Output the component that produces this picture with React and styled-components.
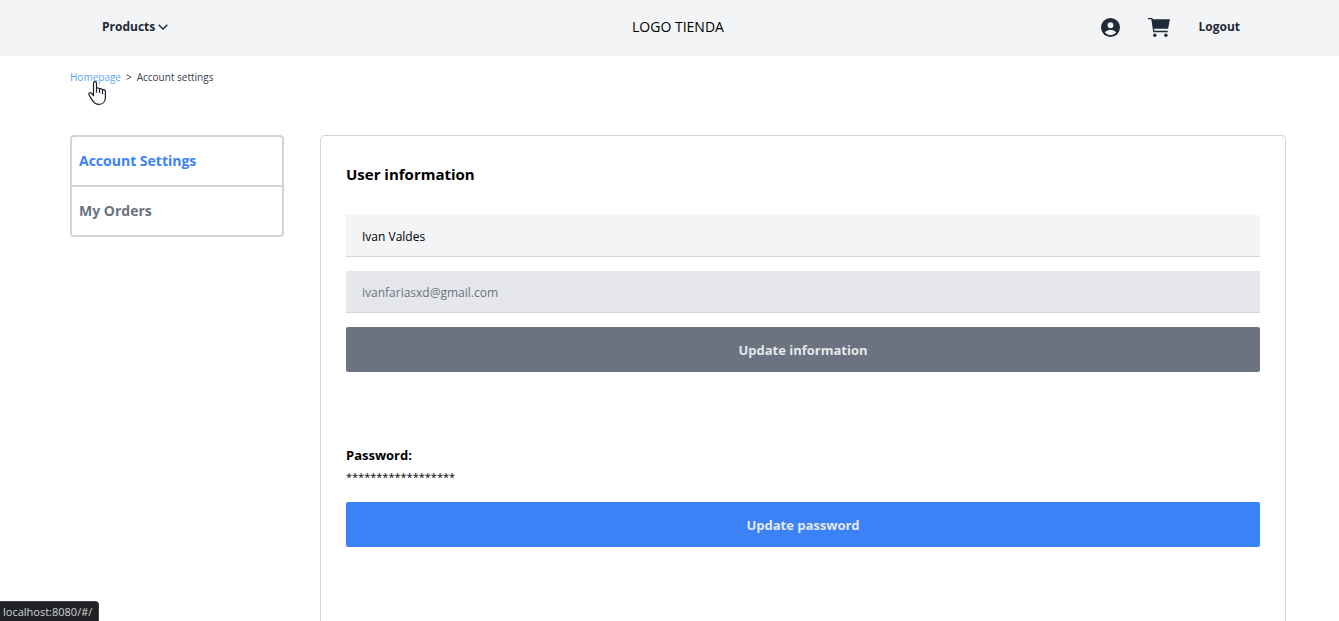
import React from "react";
import styled, { createGlobalStyle } from "styled-components";

const GlobalStyle = createGlobalStyle`
  *, *::before, *::after { box-sizing: border-box; }
  body {
    margin: 0;
    background: #fff;
    color: #000;
    font: 400 13px/20px "Open Sans", "Noto Sans", sans-serif;
  }
  button, input { font: inherit; }
  h1, h2, p, ul { margin: 0; padding: 0; }
`;

const Shell = styled.div`
  display: flex;
  flex-direction: column;
  min-height: 100vh;
`;

const Header = styled.header`
  display: grid;
  grid-template-columns: 1fr auto 1fr;
  align-items: center;
  height: 56px;
  padding: 0 85px 2px 102px;
  background: #f3f4f6;
  color: #1f2937;
`;

const MenuButton = styled.button`
  display: flex;
  align-items: center;
  justify-self: start;
  gap: 3px;
  padding: 0;
  border: 0;
  background: none;
  color: inherit;
  font-size: 12px;
  font-weight: 700;
  line-height: 20px;
  cursor: pointer;
`;

const Logo = styled.span`
  color: #000;
  font-size: 14px;
`;

const HeaderActions = styled.nav`
  display: flex;
  align-items: center;
  justify-self: end;
  gap: 28px;
  padding-right: 14px;
`;

const HeaderLink = styled.a`
  display: flex;
  color: inherit;
  font-size: 12px;
  font-weight: 700;
  text-decoration: none;
`;

const Page = styled.main`
  display: flex;
  flex: 1;
  flex-direction: column;
  padding: 11px 53px 0 70px;
`;

const Breadcrumb = styled.nav`
  display: flex;
  gap: 5px;
  color: #374151;
  font-size: 10px;
`;

const BreadcrumbLink = styled.a`
  color: #60a5fa;
  text-decoration: none;
`;

const Columns = styled.div`
  display: grid;
  flex: 1;
  grid-template-columns: 214px 1fr;
  gap: 36px;
  margin-top: 48px;
`;

const SideMenu = styled.ul`
  align-self: start;
  list-style: none;
  border: 2px solid #d1d5db;
  border-radius: 4px;
`;

const SideItem = styled.li`
  & + & { border-top: 2px solid #d1d5db; }
`;

const SideLink = styled.a`
  display: block;
  padding: 14px 7px;
  color: ${({ $active }) => ($active ? "#3b82f6" : "#6b7280")};
  font-size: 14px;
  font-weight: 700;
  text-decoration: none;
`;

const Panel = styled.section`
  padding: 24px 25px;
  border: 1px solid #d1d5db;
  border-bottom: 0;
  border-radius: 5px 5px 0 0;
`;

const Title = styled.h1`
  font-size: 15px;
  font-weight: 700;
  line-height: 28px;
`;

const Form = styled.form`
  display: flex;
  flex-direction: column;
  gap: 14px;
  margin-top: 27px;
`;

const Field = styled.input`
  width: 100%;
  height: 42px;
  padding: 2px 16px 0;
  border: 0;
  border-bottom: 1px solid #d1d5db;
  border-radius: 0;
  background: #f3f4f6;
  color: #000;
  font-size: 12px;
  outline: 0;

  &:disabled {
    background: #e5e7eb;
    color: #6b7280;
  }
`;

const ActionButton = styled.button`
  width: 100%;
  height: 45px;
  border: 0;
  border-radius: 2px;
  background: ${({ $primary }) => ($primary ? "#3b82f6" : "#6b7280")};
  color: #e5e7eb;
  font-weight: 700;
  cursor: pointer;
`;

const PasswordBlock = styled.section`
  margin-top: 73px;
`;

const PasswordTitle = styled.h2`
  font-size: 13px;
  font-weight: 700;
  line-height: 21px;
`;

const PasswordMask = styled.p`
  margin-bottom: 15px;
  font-size: 11px;
  line-height: 21px;
`;

const StatusBar = styled.div`
  position: fixed;
  left: 0;
  bottom: 0;
  padding: 1px 6px 0 3px;
  border-top: 1px solid #3c4043;
  border-right: 1px solid #3c4043;
  border-top-right-radius: 4px;
  background: #202124;
  color: #d1d5db;
  font-size: 11px;
  line-height: 18px;
`;

const Pointer = styled.svg`
  position: absolute;
  left: 88px;
  top: 81px;
  pointer-events: none;
`;

const ChevronIcon = () => (
  <svg width="10" height="6" viewBox="0 0 10 6" aria-hidden="true">
    <path d="M0.700 0.700 5 5 9.300 0.700" fill="none" stroke="currentColor" strokeWidth="1.400" />
  </svg>
);

const AccountIcon = () => (
  <svg width="19" height="19" viewBox="0 0 19 19" aria-hidden="true">
    <circle cx="9.5" cy="9.5" r="9.5" fill="currentColor" />
    <circle cx="9.5" cy="7.200" r="2.900" fill="#f3f4f6" />
    <path d="M3.800 14.300c1.500-1.800 3.500-2.600 5.700-2.600s4.200.8 5.700 2.600c-1.500 1.900-3.500 2.800-5.700 2.800s-4.200-.9-5.700-2.800z" fill="#f3f4f6" />
  </svg>
);

const CartIcon = () => (
  <svg width="22" height="19" viewBox="0 0 22 19" aria-hidden="true">
    <path d="M3.700 1.200H21.900L20.100 10.700H5.200z" fill="currentColor" />
    <path d="M0 .7H3.900L5.900 13.500H19.700" fill="none" stroke="currentColor" strokeWidth="1.300" />
    <circle cx="6.800" cy="17.200" r="1.700" fill="currentColor" />
    <circle cx="17.900" cy="17.200" r="1.700" fill="currentColor" />
  </svg>
);

export default function App() {
  return (
    <Shell>
      <GlobalStyle />
      <Header>
        <MenuButton type="button">
          Products
          <ChevronIcon />
        </MenuButton>
        <Logo>LOGO TIENDA</Logo>
        <HeaderActions>
          <HeaderLink href="#/account" aria-label="Account">
            <AccountIcon />
          </HeaderLink>
          <HeaderLink href="#/cart" aria-label="Cart">
            <CartIcon />
          </HeaderLink>
          <HeaderLink href="#/logout">Logout</HeaderLink>
        </HeaderActions>
      </Header>
      <Page>
        <Breadcrumb aria-label="Breadcrumb">
          <BreadcrumbLink href="#/">Homepage</BreadcrumbLink>
          <span>&gt;</span>
          <span>Account settings</span>
        </Breadcrumb>
        <Columns>
          <SideMenu>
            <SideItem>
              <SideLink href="#/account" $active>Account Settings</SideLink>
            </SideItem>
            <SideItem>
              <SideLink href="#/orders">My Orders</SideLink>
            </SideItem>
          </SideMenu>
          <Panel>
            <Title>User information</Title>
            <Form onSubmit={(event) => event.preventDefault()}>
              <Field type="text" aria-label="Name" defaultValue="Ivan Valdes" />
              <Field type="email" aria-label="Email" defaultValue="ivanfariasxd@gmail.com" disabled />
              <ActionButton type="submit">Update information</ActionButton>
            </Form>
            <PasswordBlock>
              <PasswordTitle>Password:</PasswordTitle>
              <PasswordMask>******************</PasswordMask>
              <ActionButton type="button" $primary>Update password</ActionButton>
            </PasswordBlock>
          </Panel>
        </Columns>
      </Page>
      <Pointer width="19" height="25" viewBox="0 0 19 25" aria-hidden="true">
        <path
          d="M5.5 14.5V2.2c0-2 3-2 3 0v5.3c.8-1 2.8-.6 3 .6.9-.8 2.7-.4 3 .8 1-.6 2.9 0 2.9 1.500v6.100c0 4-2.400 6.900-6.400 6.900-3.500 0-5.400-1.700-6.900-4.500L1 13.800c-.8-1.700 1.200-2.800 2.400-1.700z"
          fill="#fff"
          stroke="#1b1b2b"
          strokeWidth="1.200"
          strokeLinejoin="round"
        />
        <path d="M8.500 7.500v4M11.500 8v4M14.500 9v4" stroke="#1b1b2b" strokeWidth="1.200" />
      </Pointer>
      <StatusBar>localhost:8080/#/</StatusBar>
    </Shell>
  );
}
